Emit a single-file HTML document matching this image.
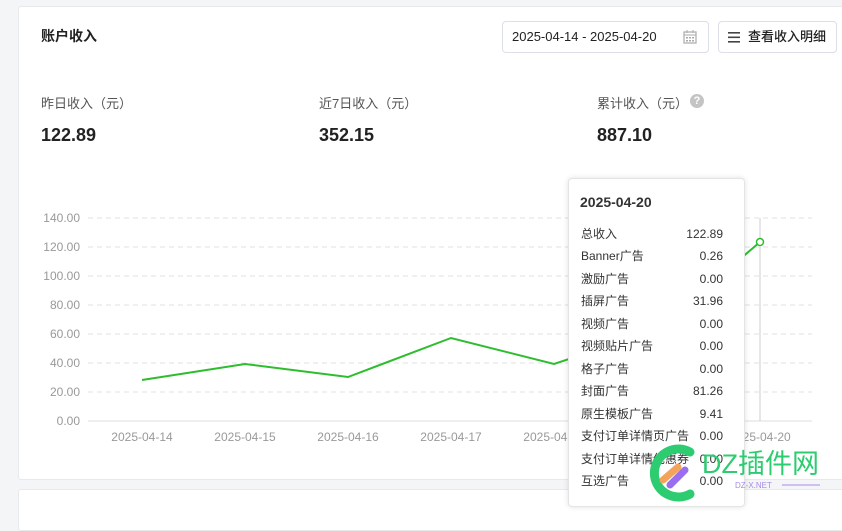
<!DOCTYPE html>
<html><head><meta charset="utf-8"><style>
body{margin:0;width:842px;height:507px;background:#f4f5f7;font-family:"Liberation Sans","Noto Sans CJK SC",sans-serif;position:relative;overflow:hidden;color:#222}
.card{position:absolute;left:18px;top:6px;width:830px;height:472px;background:#fff;border:1px solid #e8e9ec;border-radius:3px}
.card2{position:absolute;left:18px;top:489px;width:830px;height:40px;background:#fff;border:1px solid #e8e9ec;border-radius:3px}
.a{position:absolute;white-space:nowrap}
.btn{position:absolute;border:1px solid #dcdfe6;border-radius:4px;background:#fff;height:30px;top:21px;font-size:13px;line-height:30px}
.lbl{font-size:13px;color:#555}
.num{font-size:18px;font-weight:bold;color:#222}
.tip{position:absolute;left:568px;top:178px;width:175px;height:327px;background:#fff;border:1px solid #e4e4e4;border-radius:4px;box-shadow:0 0 6px rgba(0,0,0,.12);font-size:12px;color:#333}
.row{position:absolute;left:12px;right:21px;height:18px;line-height:18px}
.row span{display:block;position:absolute;top:0;height:18px;line-height:18px}
.row span:first-child{left:0}.row span:last-child{right:0}
</style></head><body>
<div class="card"></div><div class="card2"></div>
<div class="a" style="left:41px;top:26px;font-size:14px;font-weight:bold">账户收入</div>
<div class="btn" style="left:502px;width:205px"><span style="margin-left:9px">2025-04-14 - 2025-04-20</span>
<svg style="position:absolute;left:180px;top:8px" width="14" height="14" viewBox="0 0 14 14"><rect x="1" y="2" width="12" height="11" fill="none" stroke="#aaa" stroke-width="1.2"/><line x1="1" y1="5" x2="13" y2="5" stroke="#aaa"/><line x1="4" y1="0" x2="4" y2="3" stroke="#aaa"/><line x1="10" y1="0" x2="10" y2="3" stroke="#aaa"/><g fill="#aaa"><rect x="3" y="7" width="2" height="1.5"/><rect x="6" y="7" width="2" height="1.5"/><rect x="9" y="7" width="2" height="1.5"/><rect x="3" y="10" width="2" height="1.5"/><rect x="6" y="10" width="2" height="1.5"/><rect x="9" y="10" width="2" height="1.5"/></g></svg></div>
<div class="btn" style="left:718px;width:117px"><svg style="position:absolute;left:9px;top:10px" width="12" height="11"><g fill="#444"><rect y="0" width="12" height="1.6"/><rect y="4.5" width="12" height="1.6"/><rect y="9" width="12" height="1.6"/></g></svg><span style="margin-left:29px;font-weight:500">查看收入明细</span></div>
<div class="a lbl" style="left:41px;top:93px">昨日收入（元）</div>
<div class="a lbl" style="left:319px;top:93px">近7日收入（元）</div>
<div class="a lbl" style="left:597px;top:93px">累计收入（元）</div>
<div class="a" style="left:690px;top:94px;width:14px;height:14px;border-radius:50%;background:#c4c4c4;color:#fff;font-size:11px;font-weight:bold;text-align:center;line-height:14px">?</div>
<div class="a num" style="left:41px;top:125px">122.89</div>
<div class="a num" style="left:319px;top:125px">352.15</div>
<div class="a num" style="left:597px;top:125px">887.10</div>
<svg class="a" style="left:0;top:0" width="842" height="507">
<g stroke="#e0e0e0" stroke-dasharray="5,4"><line x1="88" y1="218" x2="812" y2="218"/><line x1="88" y1="247" x2="812" y2="247"/><line x1="88" y1="276" x2="812" y2="276"/><line x1="88" y1="305" x2="812" y2="305"/><line x1="88" y1="334" x2="812" y2="334"/><line x1="88" y1="363" x2="812" y2="363"/><line x1="88" y1="392" x2="812" y2="392"/></g>
<line x1="88" y1="421" x2="812" y2="421" stroke="#ddd"/>
<line x1="760" y1="218" x2="760" y2="421" stroke="#ccc"/>
<g font-size="12" fill="#999" text-anchor="end" font-family="Liberation Sans"><text x="80" y="222">140.00</text><text x="80" y="251">120.00</text><text x="80" y="280">100.00</text><text x="80" y="309">80.00</text><text x="80" y="338">60.00</text><text x="80" y="367">40.00</text><text x="80" y="396">20.00</text><text x="80" y="425">0.00</text></g>
<g font-size="12" fill="#999" text-anchor="middle" font-family="Liberation Sans"><text x="142" y="441">2025-04-14</text><text x="245" y="441">2025-04-15</text><text x="348" y="441">2025-04-16</text><text x="451" y="441">2025-04-17</text><text x="554" y="441">2025-04-18</text><text x="657" y="441">2025-04-19</text><text x="760" y="441">2025-04-20</text></g>
<polyline points="142,380 245,364 348,377 451,338 554,364 657,330 760,242" fill="none" stroke="#2ebd2e" stroke-width="2"/>
<circle cx="760" cy="242" r="3.5" fill="#fff" stroke="#2ebd2e" stroke-width="1.5"/>
</svg>
<div class="tip">
<div class="a" style="left:11px;top:15px;font-size:14px;font-weight:bold">2025-04-20</div>
<div class="row" style="top:46px"><span>总收入</span><span>122.89</span></div>
<div class="row" style="top:68px"><span>Banner广告</span><span>0.26</span></div>
<div class="row" style="top:91px"><span>激励广告</span><span>0.00</span></div>
<div class="row" style="top:113px"><span>插屏广告</span><span>31.96</span></div>
<div class="row" style="top:136px"><span>视频广告</span><span>0.00</span></div>
<div class="row" style="top:158px"><span>视频贴片广告</span><span>0.00</span></div>
<div class="row" style="top:181px"><span>格子广告</span><span>0.00</span></div>
<div class="row" style="top:203px"><span>封面广告</span><span>81.26</span></div>
<div class="row" style="top:226px"><span>原生模板广告</span><span>9.41</span></div>
<div class="row" style="top:248px"><span>支付订单详情页广告</span><span>0.00</span></div>
<div class="row" style="top:271px"><span>支付订单详情优惠券</span><span>0.00</span></div>
<div class="row" style="top:293px"><span>互选广告</span><span>0.00</span></div>
</div>
<svg class="a" style="left:640px;top:440px" width="200" height="67">
<path d="M50 12 A24 24 0 1 0 50 54" fill="none" stroke="#2ecc71" stroke-width="9" stroke-linecap="round"/>
<line x1="23" y1="40" x2="38" y2="27" stroke="#f4a35a" stroke-width="7" stroke-linecap="round"/>
<line x1="30" y1="45" x2="45" y2="30" stroke="#9b6ef0" stroke-width="7" stroke-linecap="round"/>
<text x="62" y="33" font-size="27" fill="#2ecc71" font-family="Liberation Sans,Noto Sans CJK SC,sans-serif">DZ插件网</text>
<text x="95" y="48" font-size="8" fill="#a88be8" font-family="Liberation Sans">DZ-X.NET</text>
<line x1="142" y1="45" x2="180" y2="45" stroke="#a88be8"/>
</svg>
</body></html>
